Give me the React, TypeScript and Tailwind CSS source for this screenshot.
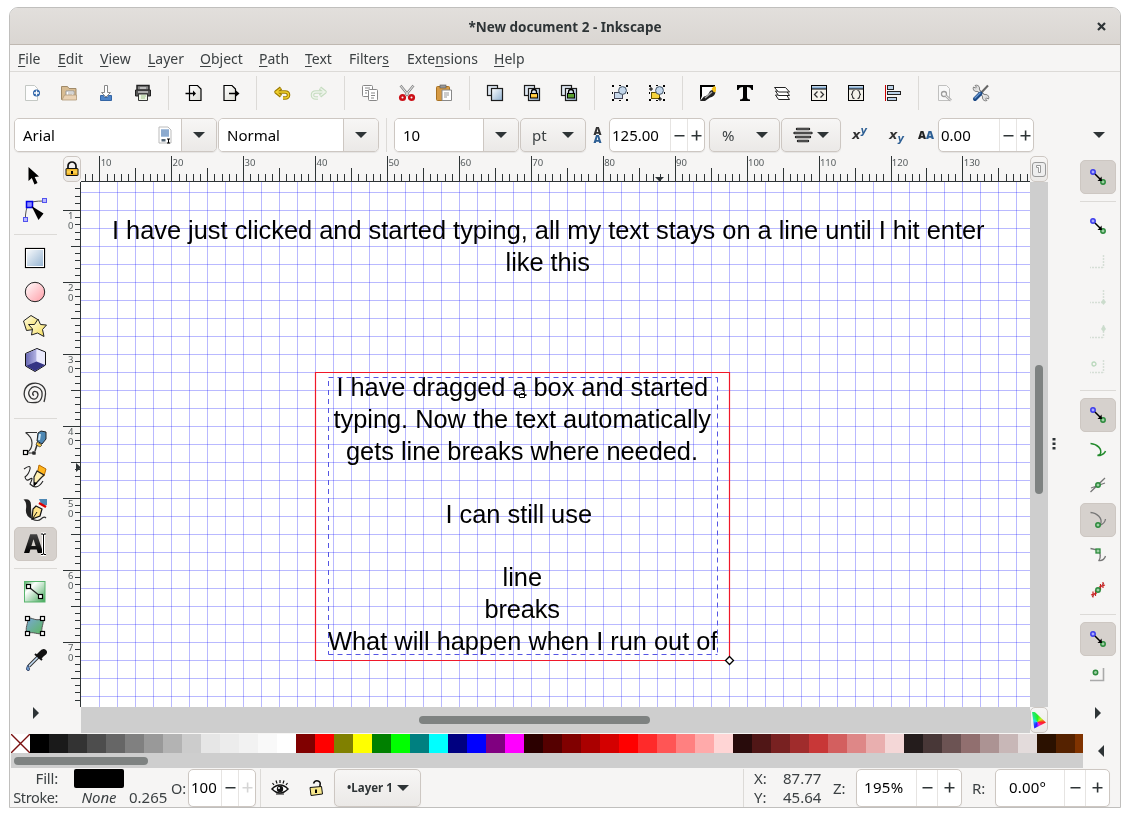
import type { ReactNode } from "react";

const DARK = "#2e3436";

function Ico({ children, s = 24 }: { children?: ReactNode; s?: number }) {
  return (
    <svg width={s} height={s} viewBox={`${-s / 2} ${-s / 2} ${s} ${s}`} fill="none" className="shrink-0 overflow-visible">
      {children}
    </svg>
  );
}

function Defs() {
  return (
    <svg width="0" height="0" className="absolute">
      <defs>
        <linearGradient id="blue" x1="0" y1="0" x2="1" y2="1"><stop stopColor="#fff" /><stop offset="1" stopColor="#8fb0d0" /></linearGradient>
        <linearGradient id="pink" x1="0" y1="0" x2="1" y2="1"><stop stopColor="#fff" /><stop offset="1" stopColor="#ff9ca6" /></linearGradient>
        <linearGradient id="yel" x1="0" y1="0" x2="1" y2="1"><stop stopColor="#fffef0" /><stop offset="1" stopColor="#f5dc50" /></linearGradient>
        <linearGradient id="grn" x1="0" y1="0" x2="1" y2="1"><stop stopColor="#4fae63" /><stop offset=".3" stopColor="#fff" /><stop offset="1" stopColor="#3fa556" /></linearGradient>
        <linearGradient id="grn2" x1="0" y1="0" x2="1" y2="1"><stop stopColor="#7aa6d8" /><stop offset="1" stopColor="#5cb85c" /></linearGradient>
        <linearGradient id="gold" x1="0" y1="0" x2="0" y2="1"><stop stopColor="#e8a812" /><stop offset=".5" stopColor="#ffd75a" /><stop offset="1" stopColor="#e39a00" /></linearGradient>
        <linearGradient id="page" x1="0" y1="0" x2="1" y2="1"><stop stopColor="#fff" /><stop offset="1" stopColor="#dcdcd4" /></linearGradient>
        <linearGradient id="ink" x1="0" y1="0" x2="0" y2="1"><stop stopColor="#444" /><stop offset="1" stopColor="#000" /></linearGradient>
        <linearGradient id="cube" x1="0" y1="0" x2="1" y2="0"><stop stopColor="#6a6ab4" /><stop offset="1" stopColor="#b4b4e4" /></linearGradient>
      </defs>
    </svg>
  );
}

const Tri = () => (
  <svg width="12" height="6" viewBox="0 0 12 6" className="shrink-0"><path d="M0 0h12L6 6z" fill={DARK} /></svg>
);

const bigBtn = "bg-linear-to-b from-[#f7f6f5] to-[#ebe9e7]";
const frame = "box-border flex shrink-0 overflow-hidden rounded-[5px] border border-[#cdc7c2] shadow-[0_1px_1px_rgba(0,0,0,0.07)]";

function Combo({ text, entry, w, icon }: { text: string; entry: string; w: string; icon?: ReactNode }) {
  return (
    <div className={`${frame} h-[34px] ${w}`}>
      <div className={`flex items-center bg-white pl-2 text-black ${entry}`}>
        <span className="pb-px">{text}</span>
        {icon && <span className="mr-2 ml-auto flex">{icon}</span>}
      </div>
      <div className={`flex flex-1 items-center justify-center border-l border-[#cdc7c2] ${bigBtn}`}><Tri /></div>
    </div>
  );
}

function Spin({ value, cls, cell, last, text, dim }: { value: string; cls: string; cell: string; last: string; text: string; dim?: boolean }) {
  return (
    <div className={`${frame} bg-white ${cls}`}>
      <div className={`flex min-w-0 flex-1 items-center pb-px text-black ${text}`}>{value}</div>
      <div className={`flex shrink-0 items-center justify-center border-l border-[#e6e4e2] ${cell}`}>
        <svg width="11" height="11"><path d="M0.500 5h10v1.600H.5z" fill={DARK} /></svg>
      </div>
      <div className={`flex shrink-0 items-center justify-center border-l border-[#e6e4e2] ${last}`}>
        <svg width="11" height="11"><path d="M0.500 5h10v1.600H.5zM4.800 .5h1.600v10H4.800z" fill={dim ? "#d5d5d5" : DARK} /></svg>
      </div>
    </div>
  );
}

const menus: [string, string, string, string][] = [
  ["", "F", "ile", "w-[40px]"], ["", "E", "dit", "w-[42px]"], ["", "V", "iew", "w-[48px]"], ["", "L", "ayer", "w-[52px]"],
  ["", "O", "bject", "w-[59px]"], ["", "P", "ath", "w-[46px]"], ["", "T", "ext", "w-[44px]"], ["Filter", "s", "", "w-[58px]"],
  ["Exte", "n", "sions", "w-[87px]"], ["", "H", "elp", "w-[60px]"],
];

const Padlock = ({ body = "url(#gold)" }: { body?: string }) => (
  <g><path d="M-2.500 1v-2a2 2 0 0 1 5 0v2" stroke="#000" strokeWidth="1.3" /><rect x="-3.500" y=".5" width="7" height="4.500" fill={body} stroke="#000" /></g>
);
const pageShape = <path d="M-6.500-7.500h8l3.500 3.500v11.500h-11.500z" fill="url(#page)" stroke="#000" strokeWidth="1.2" />;
const Dots = () => (
  <path d="M-8-8h2v2h-2zM-1-8h2v1h-2zM6-8h2v2h-2zM-8 6h2v2h-2zM-1 7h2v1h-2zM6 6h2v2h-2zM-8-1h1v2h-1zM7-1h1v2h-1z" fill="#000" />
);
const Dup = () => (
  <g stroke="#1c1c1c" strokeWidth="1.2"><rect x="-7.500" y="-7.500" width="10" height="10" fill="#dfe8f2" /><rect x="-3.500" y="-4.500" width="11" height="12" fill="url(#blue)" /></g>
);

const commands: (ReactNode | null)[] = [
  <g transform="translate(.5 0)"><path d="M-7-7.500h9l3 3v12h-12z" fill="#fdfdfd" stroke="#c4c8c4" /><circle cx="4" r="3.500" fill="#2e64a8" /><path d="M1.500 0h5M4-2.500v5" stroke="#fff" strokeWidth="1.300" /></g>,
  <><path d="M-7.500 6.500v-13h6l1.500 2h7v9z" fill="#d8bc92" stroke="#a08a68" /><path d="M-3 4v-6h8v6z" fill="#fff" stroke="#999" /><path d="M-1 0h5M-1 2h4" stroke="#aaa" /><path d="M-7 7l2.500-5h12v5z" fill="#ead2b4" stroke="#b39a78" strokeWidth=".8" /></>,
  <><path d="M-1.500-7.500h3v7h3L0 4-4.500-.5h3z" fill="#fff" stroke="#888" /><path d="M-5.500 2.500h3l1 2h3l1-2h3v5h-11z" fill="#4c83c8" stroke="#3465a4" /></>,
  <><path d="M-6-7.500h12v5h-12z" fill="#888" stroke="#222" strokeWidth="1.500" /><path d="M-3-5h6" stroke="#eee" /><path d="M-7.500-3h15v6h-15z" fill="#555" stroke="#222" /><path d="M-5-1h10" stroke="#fff" /><path d="M-4.500 1h9v6.500h-9z" fill="#eef6e6" stroke="#333" /><path d="M-2 3h5M-2 5h4" stroke="#a2c48a" /></>,
  null,
  <><g transform="translate(2 0)">{pageShape}</g><path d="M-8.500.5h8" stroke="#000" strokeWidth="1.500" /><path d="M-1-2.500L2 .5l-3 3z" fill="#000" /></>,
  <><g transform="translate(-.5 0)">{pageShape}</g><path d="M-2 .5h8" stroke="#000" strokeWidth="1.500" /><path d="M5-2.500L8.500.5 5 3.500z" fill="#000" /></>,
  null,
  <><path d="M-1-5l-5 4 5 4M-5-1H3q3.500 0 3.500 3T3 5H1" stroke="#9b7a00" strokeWidth="3.600" strokeLinejoin="round" /><path d="M-1.500-4.500l-4.500 3.500 4.500 3.500M-5-1H3q3.500 0 3.500 3T3 5H1" stroke="#f0cf2c" strokeWidth="1.500" /></>,
  <><path d="M1-5l5 4-5 4M5-1H-3q-3.500 0-3.500 3T-3 5h2" stroke="#c6dcc0" strokeWidth="3.600" strokeLinejoin="round" /><path d="M1.500-4.500L6-1 1.500 2.500M5-1H-3q-3.500 0-3.500 3T-3 5h2" stroke="#edf4ea" strokeWidth="1.500" /></>,
  null,
  <><g stroke="#888" fill="#fff"><rect x="-7.500" y="-7.500" width="10" height="11" rx="1" /><rect x="-1.500" y="-3.500" width="9" height="11" rx="1" /></g><path d="M-5-5h5M-5-2.500h3M-5 0h2M1 0h4M1 2.500h4M1 5h3" stroke="#888" /></>,
  <><path d="M-6.500-7.500L2 3M6.500-7.500L-2 3" stroke="#888" strokeWidth="2.600" /><path d="M-6.500-7.500L2 3M6.500-7.500L-2 3" stroke="#eee" strokeWidth="1" /><g stroke="#cc1018" strokeWidth="2.600"><circle cx="-4.500" cy="4.500" r="2.300" /><circle cx="4.500" cy="4.500" r="2.300" /></g></>,
  <><rect x="-7.500" y="-6.500" width="13" height="14" rx="1" fill="#d69a44" stroke="#a87122" /><rect x="-4" y="-8" width="6" height="3" fill="#999" stroke="#555" strokeWidth=".6" /><path d="M-2-3h9.500v10.500h-9.500z" fill="#fff" stroke="#888" /><path d="M0 0h5M0 2h5M0 4h3" stroke="#999" /></>,
  null,
  <Dup />,
  <><Dup /><g transform="translate(2 0)"><Padlock /></g></>,
  <><Dup /><g transform="translate(2 0)"><Padlock body="#58a030" /></g></>,
  null,
  <><Dots /><rect x="-5.500" y="-.5" width="8" height="6" fill="#c8d8ea" stroke="#445" /><circle cx="2.500" cy="-2.500" r="3.900" fill="#c3d6ea" stroke="#456" /></>,
  <><Dots /><rect x="-5.500" y="-.5" width="8" height="6" fill="#f6d43c" stroke="#665500" /><circle cx="2.500" cy="-2.500" r="3.900" fill="#c3d6ea" stroke="#456" /><path d="M-8-4h4M-6-6v4M1 6h4M3 4v4" stroke="#000" /></>,
  null,
  <><rect x="-7.500" y="-7.500" width="13" height="14.500" fill="#fff" /><path d="M-8-8h15v2h-13v9l-2 5z" fill="#000" /><path d="M-8 8L-4 3.500Q0 3 2-2l3-1.500 2.500 3Q6 4 2 4.500L-3 8z" fill="#222" /><path d="M4-1l-7 6" stroke="#aaa" strokeWidth="1.500" /><path d="M3.500-4l2.500-3 2 1v4.500L6-.5z" fill="#f5c21c" /></>,
  <path d="M-8-8H8v5H6.500Q6-6 2-6V4q0 2.500 3 2.500V8H-5V6.500q3 0 3-2.500V-6q-4 0-4.500 3H-8z" fill="#000" />,
  <g stroke="#222" fill="#fff" strokeLinejoin="round"><path d="M-6.500 2L-3.500 6.500H7.500L4.500 2z" /><path d="M-6.500-2L-3.500 2.500H7.500L4.500-2z" /><path d="M-7.500-5.500H3.500L7.500-1H-3.500z" /></g>,
  <><rect x="-7.500" y="-7.500" width="15" height="15" fill="#f4f2ea" stroke="#000" /><path d="M-7-6.500H7v2.500H-7z" fill="#8db4da" /><path d="M-7-4H7" stroke="#000" /><path d="M-1.500-1.500L-4.500 1.500l3 3M1.500-1.500l3 3-3 3" stroke="#333" strokeWidth="1.300" /></>,
  <><rect x="-7.500" y="-7.500" width="15" height="15" fill="#f4f2ea" stroke="#000" /><path d="M-7-6.500H7v2.500H-7z" fill="#8db4da" /><path d="M-7-4H7" stroke="#000" /><path d="M-1.500-2.500q-2 0-2 2t-1.500 2q1.500 0 1.500 2t2 2M1.500-2.500q2 0 2 2T5 1.500q-1.500 0-1.500 2t-2 2" stroke="#333" strokeWidth="1.100" /></>,
  <><path d="M-7.500-8V8" stroke="#c00" /><g fill="#bcd2e8" stroke="#222"><rect x="-5.500" y="-7.500" width="6" height="4" /><rect x="-5.500" y="-1.500" width="13" height="3" /><rect x="-5.500" y="4.500" width="9" height="3" /></g></>,
  null,
  <g opacity=".7"><path d="M-5.500-7.500h8l3 3v12h-11z" fill="#fafafa" stroke="#aaa" /><circle cx="0" cy="1" r="2.500" stroke="#777" strokeWidth="1.300" /><path d="M1.500 2.500L7 7.500" stroke="#888" strokeWidth="2.500" /><path d="M1.500 2.500L7 7.500" stroke="#eee" /></g>,
  <><path d="M-4-4L5 5" stroke="#777" strokeWidth="3.200" /><path d="M-6-7.500a3.200 3.200 0 1 1-1.500 1.500l2 1 1-1z" fill="#ddd" stroke="#777" strokeWidth=".9" /><path d="M6 7.500a3.200 3.200 0 1 1 1.500-1.500l-2-1-1 1z" fill="#ddd" stroke="#777" strokeWidth=".9" /><path d="M-3.500-3.500l7 7" stroke="#eee" strokeWidth="1.500" /><path d="M7-7.500L-1 1" stroke="#666" strokeWidth="2" /><path d="M-.5.500L-6 6" stroke="#1d4a86" strokeWidth="4" strokeLinecap="round" /><path d="M-1 0l-5 5" stroke="#6c9bd2" strokeWidth="1.300" strokeLinecap="round" /></>,
];

const sq = (x: number, y: number, k: string, f = "#fff", s = 4) => <rect key={k} x={x} y={y} width={s} height={s} fill={f} stroke="#000" strokeWidth="1.200" />;

const tools: (ReactNode | null)[] = [
  <path d="M-6.500-9V5L-3.200 2-.5 8.500 2.500 7-.3 1 4 .5z" fill="#000" />,
  <><path d="M-9.500 8V5Q-8.500-4-6-6.500T9-9" stroke="#555" /><rect x="-11.500" y="7.500" width="4" height="4" fill="#b8b8ff" stroke="#5353ee" /><rect x="7.500" y="-11.500" width="4" height="4" fill="#b8b8ff" stroke="#5353ee" /><rect x="-8.500" y="-8.500" width="6" height="6" fill="#8c8cff" stroke="#0000e8" strokeWidth="1.500" /><path d="M-3.500-4L8.500 3.500 3.500 10z" fill="#000" /></>,
  null,
  <><rect x="-9.500" y="-9.500" width="19" height="19" fill="url(#blue)" stroke="#000" strokeWidth="1.200" /><rect x="-8.500" y="-8.500" width="17" height="17" stroke="#fff" /></>,
  <circle cx="0" cy="0" r="9.700" fill="url(#pink)" stroke="#222" />,
  <g stroke="#222" fill="url(#yel)" strokeLinejoin="round"><path d="M-11.500-5L-4-10.500 3.500-6 2 3-8.500 4.500z" /><path d="M3-7L5.500-1.500 11.500-1 7.500 3.500 9 10.500 2.500 7-3.500 9-2.500 3-6.500-1.500-.5-1.500z" /></g>,
  <><path d="M-9.500-6.500L2-11.500 10.500-8V5L0 11.500-9.500 6z" fill="#c9c9f5" stroke="#111" strokeLinejoin="round" /><path d="M-9-6L1.500-10.800V1.500L-9 5.700z" fill="url(#cube)" /><path d="M1.500-10.800L10-7.500V5L1.500 1.500z" fill="#eaeafc" /><path d="M-9 5.700L1.500 1.500 10 5 0 11z" fill="#353584" /></>,
  <path d="M-1 1.500Q-3 .5-2-1.500T2-2Q4 .5 2 3.500T-4 4Q-8 0-5-4.500T3-6.500Q8-4 7 2T1 8.500T-7 8Q-12 3-10.500-3T-3-10.500T7-8.500T10.500 0T9 8" stroke="#333" strokeWidth="1.300" />,
  null,
  <><path d="M-9.500-9.500H2M-9.500-9.500Q-3-5-3 1T-7.500 10M-7.500 11H-1.500" stroke="#333" strokeWidth="1.200" />{sq(-11.500, 8.500, "a")}{sq(-2, 10, "b", "#fff", 2)}<path d="M3-9L6-11 11-10V-3L7 2 2-1z" fill="#4e88b4" stroke="#222" /><path d="M5-8L4-2" stroke="#cfe6f5" strokeWidth="2" /><path d="M2 0l5 3-2 2-4-2z" fill="#f5c640" stroke="#333" strokeWidth=".7" /><path d="M2 3L0 9" stroke="#333" strokeWidth="1.500" /></>,
  <><path d="M-11-7Q-4-12-5-7T-10 1Q-9 6-5 3T-5 8Q2 15 8 5" stroke="#222" strokeWidth="1.100" /><path d="M4-11L11-7 9 0 2-1z" fill="#ffb51c" stroke="#b86a00" /><path d="M2-5L9-1 5 3-1 9.500-1 1z" fill="#fff0b4" stroke="#222" strokeWidth="1.200" /><path d="M-1 10v-4L2.500 7z" fill="#000" /></>,
  <><path d="M-11.500-10.500Q-4-12-4-5T-3 9Q-10 6-9-1T-11.500-10.500z" fill="#222" /><path d="M-3 9Q3 12 6 9T11 8" stroke="#333" strokeWidth="1.200" /><path d="M4-11h8V-5L7-4z" fill="#4e88b4" /><path d="M4-7l7 4" stroke="#d00" strokeWidth="2.500" /><path d="M1-4L7-1 5 6-3 9-2-1z" fill="#ffe38a" stroke="#111" strokeWidth="1.200" /><path d="M-2 8L2 2" stroke="#111" /></>,
  <><path d="M-11 9L-4.800-9.700H2L8.300 9H2.800L1.700 5.500H-4.600L-5.700 9zM-3.600 2H.7L-1.500-4.800z" fill="url(#ink)" /><path d="M6-10h2l.5 1 .5-1h2M8.500-9V9M6 10.500h2l.5-1.500.5 1.500h2" stroke="#fff" strokeWidth="3" /><path d="M6-10h2l.5 1 .5-1h2M8.500-9V9M6 10.500h2l.5-1.500.5 1.500h2" stroke="#000" strokeWidth="1" /></>,
  null,
  <><rect x="-10.500" y="-10.500" width="20.500" height="20.500" fill="url(#grn)" stroke="#58b46c" /><path d="M-5-4L5 4" stroke="#222" strokeWidth="1.200" />{sq(-8.500, -7.500, "a")}{sq(3.500, 2.500, "b")}</>,
  <><path d="M-7.500-8C-3-9 1-4 7.500-7.500 10-3 5 2 7.500 7.500 3 9-2 5-7.500 7.500-11 2-6-3-7.500-8z" fill="url(#grn2)" stroke="#555" />{sq(-9.500, -9.500, "a")}{sq(5.500, -9.500, "b")}{sq(-9.500, 5.500, "c")}{sq(5.500, 5.500, "d")}</>,
  <><path d="M4-4L-6 6" stroke="#333" strokeWidth="3.600" /><path d="M4-4L-6 6" stroke="#c8e0f8" strokeWidth="1.600" /><path d="M1-5L4-8Q8-13 11-10T9-4L6-1z" fill="#111" /><path d="M0-6l7 6" stroke="#111" strokeWidth="2" /><path d="M-7 5Q-10 10-7 10.500T-7 5z" fill="#76a5dc" stroke="#346" /></>,
];

const Node = ({ x, y, c = "#2c8a3c", f = "#9fd0a5" }: { x: number; y: number; c?: string; f?: string }) => (
  <circle cx={x} cy={y} r="2.200" fill={f} stroke={c} strokeWidth="1.500" />
);
const SnapMain = () => (
  <><Node x={-5} y={-5} c="#3c3cec" f="#a9a9ff" /><Node x={5} y={5} /><path d="M-3-3L2 2" stroke="#000" strokeWidth="1.500" /><path d="M4 4H-.5L1.500 2 3.500-.5z" fill="#000" /></>
);
const Faded = ({ children }: { children?: ReactNode }) => (
  <><path d="M5.500-6V6.500M5 6.500H-8" stroke="#d6dfd6" strokeWidth="1.500" strokeDasharray="2 1" />{children}</>
);
const snaps: ({ i: ReactNode; on?: boolean } | null)[] = [
  { i: <SnapMain />, on: true }, null, { i: <SnapMain /> },
  { i: <Faded /> },
  { i: <Faded><path d="M5.500 3L8 6 5.500 9 3 6z" fill="#cbdccc" /></Faded> },
  { i: <Faded><path d="M5.500-6L8-2 5.500 1 3-2z" fill="#cbdccc" /></Faded> },
  { i: <Faded><circle cx="-4" cy="-2" r="2" stroke="#b9d8bc" strokeWidth="1.300" /></Faded> },
  null, { i: <SnapMain />, on: true },
  { i: <path d="M-7.500-6.500C-1-6 5-1 2 4.500L-.5 5.500H2Q6.500 4 7.500 1" stroke="#228a2c" strokeWidth="1.500" /> },
  { i: <><path d="M-7.500 7L7-7M-7 3L7-2" stroke="#777" strokeWidth="1.300" /><Node x={0} y={0} /></> },
  { i: <><path d="M-7.500-7.500C-1-7 5-2 2.500 4.500M1 5.500Q7 4 7.500-1" stroke="#777" strokeWidth="1.300" /><Node x={0} y={5} /></>, on: true },
  { i: <><path d="M-7.500-6.500L0-5Q4 0 1 5.500 6 6 7.500 1" stroke="#777" strokeWidth="1.300" /><rect x="-2" y="-6" width="4" height="4" fill="#9fd0a5" stroke="#2c8a3c" strokeWidth="1.300" /></> },
  { i: <><path d="M-6 7L6-7" stroke="#666" /><path d="M-5 1.500v6M-2.500 0v6M2.500-6v6M5-8v6M-7 5l6-2M1-3l6-2" stroke="#d02020" strokeWidth="1.200" /><Node x={0} y={0} /></> },
  null, { i: <SnapMain />, on: true },
  { i: <><path d="M5.500-6V6.500H-8" stroke="#aaa" strokeWidth="1.600" /><Node x={-2.500} y={-1.500} /></> },
];

const palette = (
  "000000 1a1a1a 333333 4d4d4d 666666 808080 999999 b3b3b3 cccccc e6e6e6 ececec f2f2f2 f9f9f9 ffffff " +
  "800000 ff0000 808000 ffff00 008000 00ff00 008080 00ffff 000080 0000ff 800080 ff00ff " +
  "2b0000 550000 800000 aa0000 d40000 ff0000 ff2a2a ff5555 ff8080 ffaaaa ffd5d5 " +
  "280b0b 501616 782121 a02c2c c83737 d35f5f de8787 e9afaf f4d7d7 241c1c 483737 6c5353 916f6f ac9393 c8b7b7 e3dbdb 2b1100 552200 803300"
).split(" ");

const canvasText: [string, number, number, number][] = [
  ["I have just clicked and started typing, all my text stays on a line until I hit enter", 112, 239, 872.500],
  ["like this", 505.500, 270.700, 84.500],
  ["I have dragged a box and started", 336.500, 396, 371.500],
  ["typing. Now the text automatically", 333.500, 427.700, 377.500],
  ["gets line breaks where needed.", 346, 459.500, 352],
  ["I can still use", 445.500, 522.800, 146.500],
  ["line", 502.500, 586, 39.500],
  ["breaks", 484.500, 617.900, 75.500],
  ["What will happen when I run out of", 328, 649.600, 389.500],
];

function HRuler() {
  const ticks = [];
  for (let i = -2; i <= 129; i++) {
    const x = Math.floor(99.9 + i * 7.192) + 0.5;
    const y = i % 10 === 0 ? 156 : i % 5 === 0 ? 168 : 174;
    if (x > 81 && x < 1030) ticks.push(<path key={i} d={`M${x} ${y}V182`} stroke={DARK} />);
  }
  return (
    <svg width="949" height="26" viewBox="81 156 949 26">
      {ticks}
      <path d="M81 181.500H1030" stroke={DARK} />
      {Array.from({ length: 13 }, (_, k) => (
        <text key={k} x={100.700 + k * 71.920} y="166" fontSize="9.500" fill="#555b5d">{(k + 1) * 10}</text>
      ))}
      <path d="M655 177h9l-4.500 4.500z" fill={DARK} />
    </svg>
  );
}

function VRuler() {
  const ticks = [];
  for (let i = -3; i <= 68; i++) {
    const y = Math.floor(210.400 + i * 7.200) + 0.5;
    const x = i % 10 === 0 ? 63 : i % 5 === 0 ? 71 : 75;
    ticks.push(<path key={i} d={`M${x} ${y}H81`} stroke={DARK} />);
  }
  return (
    <svg width="18" height="525" viewBox="63 182 18 525">
      {ticks}
      <path d="M80.500 182V707" stroke={DARK} />
      {[1, 2, 3, 4, 5, 6, 7].map((d, k) => (
        <g key={d} fontSize="9.500" fill="#555b5d">
          <text x="68" y={219 + k * 72}>{d}</text>
          <text x="68" y={228.500 + k * 72}>0</text>
        </g>
      ))}
      <path d="M76 463v9l5-4.500z" fill={DARK} />
    </svg>
  );
}

function Canvas() {
  return (
    <svg width="949" height="525" viewBox="81 182 949 525" className="bg-white">
      {Array.from({ length: 52 }, (_, k) => {
        const x = Math.floor(99.900 + k * 17.980) + 0.5;
        return <path key={`v${k}`} d={`M${x} 182V707`} stroke="#b9b9ff" />;
      })}
      {Array.from({ length: 29 }, (_, k) => (
        <path key={`h${k}`} d={`M81 ${192.5 + k * 18}H1030`} stroke="#b9b9ff" style={{ mixBlendMode: "multiply" }} />
      ))}
      <g fontFamily="Liberation Sans, Arial, sans-serif" fontSize="25.400" fill="#000">
        {canvasText.map(([t, x, y, w]) => (
          <text key={t} x={x} y={y} textLength={w}>{t}</text>
        ))}
      </g>
      <path d="M328.500 377.500H717.500M717.500 377.500V654.500M328.500 654.500H717.500M328.500 381V654.500" stroke="#5555e2" strokeDasharray="5 4" fill="none" />
      <path d="M315.500 372.500H729.500V660.500H315.500z" stroke="#f0182a" strokeWidth="1.200" fill="none" />
      <path d="M729.500 656.500l4 4-4 4-4-4z" fill="#fff" stroke="#000" strokeWidth="1.300" />
      <path d="M519.500 394.500h5v3h-5z" fill="#fff" stroke="#000" /><path d="M519 393l3-3 3 3" fill="#fff" stroke="#000" strokeDasharray="1 1.500" />
    </svg>
  );
}

export default function App() {
  return (
    <div className="h-[817px] w-[1130px] overflow-hidden bg-white pt-[7px] pl-[9px] font-['Noto_Sans',sans-serif] text-[15px] leading-5 text-[#3c4143]">
      <Defs />
      <div className="flex h-[801px] w-[1112px] flex-col overflow-hidden rounded-t-[9px] border border-[#c0bfbd] bg-[#f6f5f4]">
        <header className="flex h-[37px] shrink-0 items-center border-b border-[#bfb8b1] bg-linear-to-b from-[#e2dfdc] to-[#dad6d2]">
          <div className="flex-1 pt-px text-center text-[13.500px] font-bold text-[#2e3436]">
            <span>*New document 2 - Inkscape</span>
          </div>
          <svg width="9" height="9" viewBox="0 0 9 9" className="-ml-[23px] mr-[14px]"><path d="M1 1l7 7M8 1L1 8" stroke={DARK} strokeWidth="2.200" /></svg>
        </header>
        <nav className="flex h-[27px] shrink-0 items-center border-b border-[#dcdad7] pt-[2px] pl-2 text-[14px]">
          {menus.map(([a, u, b, w]) => (
            <span key={a + u + b} className={`shrink-0 whitespace-nowrap ${w}`}>{a}<span className="underline decoration-1 underline-offset-2">{u}</span>{b}</span>
          ))}
        </nav>
        <div className="flex h-[42px] shrink-0 items-center pl-[3.500px]">
          {commands.map((c, i) =>
            c === null ? (
              <div key={i} className="h-[34px] w-[14px] shrink-0 pl-[6.500px]"><div className="h-full w-px bg-[#dcdad7]" /></div>
            ) : (
              <div key={i} className="flex w-[37px] shrink-0 justify-center"><Ico>{c}</Ico></div>
            )
          )}
        </div>
        <div className="flex h-[40px] shrink-0 items-center pt-[2px] pl-1">
          <Combo text="Arial" entry="w-[166px]" w="mr-px w-[203px]" icon={
            <Ico s={16}><path d="M-6-8h9l3 3V8H-6z" fill="#fff" stroke="#bbb" /><rect x="-4" y="-6" width="8" height="8" fill="#a9c1de" /><path d="M-4-4h8M-4-2h8M-4 0h8" stroke="#6f93c0" /><rect x="-3.500" y="4" width="4" height="2.500" fill="#567" /><path d="M2 4h3M3.500 4v4M2 8h3" stroke="#000" /></Ico>
          } />
          <Combo text="Normal" entry="w-[124px]" w="mr-[7px] w-[161px]" />
          <div className="mr-[7px] h-[34px] w-px bg-[#dcdad7]" />
          <Combo text="10" entry="w-[88px]" w="mr-px w-[125px]" />
          <div className={`${frame} h-[34px] w-[66px] items-center justify-between pr-[11px] pl-[11px] ${bigBtn}`}><span className="pb-px">pt</span><Tri /></div>
          <div className="flex w-[23px] shrink-0 flex-col items-center text-[11px] leading-[8px] font-black"><span className="text-[#333]">A</span><span className="text-[#2d5f94]">A</span></div>
          <Spin value="125.00" cls="h-[34px] w-[96px] mr-[4px]" cell="w-[17px]" last="w-[17px]" text="pl-[2px]" />
          <div className={`${frame} mr-px h-[34px] w-[71px] items-center justify-between pr-[11px] pl-[12px] ${bigBtn}`}><span className="pb-px">%</span><Tri /></div>
          <div className={`${frame} h-[34px] w-[60px] items-center justify-between pr-[11px] pl-[11px] ${bigBtn}`}>
            <svg width="20" height="16" viewBox="0 0 20 16"><g stroke="#222" strokeWidth="2.400" strokeLinecap="round"><path d="M4 2h12M1.500 6h17M3 10h14M5 14h10" /></g><g stroke="#8a8a8a" strokeWidth=".8"><path d="M4 2h12M1.500 6h17M3 10h14M5 14h10" /></g></svg>
            <Tri />
          </div>
          <div className="flex w-[37px] shrink-0 justify-center font-['DejaVu_Sans',sans-serif] text-[13px] font-bold text-[#333] italic"><span>x<sup className="text-[10px] text-[#2d5f94]">y</sup></span></div>
          <div className="flex w-[37px] shrink-0 justify-center font-['DejaVu_Sans',sans-serif] text-[13px] font-bold text-[#333] italic"><span>x<sub className="text-[10px] text-[#2d5f94]">y</sub></span></div>
          <div className="w-[23px] shrink-0 pl-[3px] text-[11px] font-black text-[#222]">A<span className="text-[#2d5f94]">A</span></div>
          <Spin value="0.00" cls="h-[34px] w-[96px]" cell="w-[17px]" last="w-[17px]" text="pl-[2px]" />
          <div className="ml-auto pr-[15px]"><Tri /></div>
        </div>

        <main className="flex h-[579px] shrink-0">
          <aside className="flex w-[53px] shrink-0 flex-col pt-[5px] pl-1">
            {tools.map((t, i) =>
              t === null ? (
                <div key={i} className="flex h-[14px] w-[43px] items-center"><div className="h-px w-full bg-[#dcdad7]" /></div>
              ) : (
                <div key={i} className={`flex h-[34px] w-[43px] items-center justify-center pr-px ${i === 12 ? "rounded-[5px] border border-[#cdc7c2] bg-[#d6d1cd]" : ""}`}><Ico>{t}</Ico></div>
              )
            )}
            <svg width="6" height="12" className="mt-[30px] ml-[19px]"><path d="M0 0v12l6-6z" fill={DARK} /></svg>
          </aside>
          <section className="grid w-[985px] shrink-0 grid-cols-[18px_949px_18px] grid-rows-[26px_525px_26px] pt-[2px]">
            <div className={`flex items-center justify-center rounded-[5px] border border-[#cdc7c2] ${bigBtn}`}>
              <Ico s={16}><path d="M-4 0v-3a4 4 0 0 1 8 0v3" stroke="#111" strokeWidth="1.700" /><rect x="-6" y="-.5" width="12" height="7" rx=".5" fill="url(#gold)" stroke="#111" /><path d="M-1 2h2v3h-2z" fill="#000" /></Ico>
            </div>
            <HRuler />
            <div className={`flex items-center justify-center rounded-[5px] border border-[#cdc7c2] ${bigBtn}`}>
              <Ico s={16}><rect x="-6.500" y="-6.500" width="13" height="14" rx="2.500" fill="#eee" stroke="#999" /><path d="M-2.500-3.500h4v7h-2v-5h-2z" fill="#fff" stroke="#999" /></Ico>
            </div>
            <VRuler />
            <Canvas />
            <div className="bg-[#cecece] pt-[183px] pl-[5px]"><div className="h-[129px] w-2 rounded-full bg-[#7e8281]" /></div>
            <div />
            <div className="bg-[#cecece] pt-[9px] pl-[338px]"><div className="h-2 w-[231px] rounded-full bg-[#7e8281]" /></div>
            <div className={`flex items-center justify-center rounded-[5px] border border-[#cdc7c2] ${bigBtn}`}>
              <div className="h-[17px] w-[14px] bg-[conic-gradient(from_0deg_at_38%_58%,#20f020,#c8f020_16%,#ff2020_26%,#ff2060_34%,#f020f0_42%,#2020ff_55%,#2060ff_66%,#20e0f0_80%,#20f020)] [clip-path:polygon(0_0,22%_4%,100%_64%,16%_100%)]" />
            </div>
          </section>
          <div className="flex w-8 shrink-0 flex-col items-start pt-[284px] pl-[4px]">
            <svg width="4" height="14"><path d="M.5 0h3v2.500h-3zM.5 4.500h3V7h-3zM.5 9h3v2.500h-3z" fill={DARK} /></svg>
          </div>
          <aside className="flex w-9 shrink-0 flex-col pt-[5.500px]">
            {snaps.map((s, i) =>
              s === null ? (
                <div key={i} className="flex h-[14px] items-center"><div className="h-px w-full bg-[#dcdad7]" /></div>
              ) : (
                <div key={i} className="flex h-[35px] items-center">
                  <div className={`flex h-[34px] w-9 items-center justify-center rounded-[5px] ${s.on ? "border border-[#cdc7c2] bg-[#d6d1cd]" : ""}`}><Ico s={20}>{s.i}</Ico></div>
                </div>
              )
            )}
            <svg width="6" height="12" className="mt-[15.500px] ml-[15px]"><path d="M0 0v12l6-6z" fill={DARK} /></svg>
          </aside>
        </main>

        <div className="flex h-[35px] shrink-0 pt-px pl-px">
          <div className="w-[1072px] shrink-0 overflow-hidden">
            <div className="flex h-[19px]">
              <svg width="19" height="19" className="shrink-0 bg-white"><path d="M0 0l19 19M19 0L0 19" stroke="#7a1010" strokeWidth="1.400" /></svg>
              {palette.map((c, i) => (
                <div key={i} className="h-[19px] w-[19px] shrink-0" style={{ backgroundColor: `#${c}` }} />
              ))}
            </div>
            <div className="h-[15px] bg-[#cecece] pt-1 pl-[3px]"><div className="h-2 w-[134px] rounded-full bg-[#7e8281]" /></div>
          </div>
          <svg width="6" height="12" className="mt-[11px] ml-[15px]"><path d="M6 0v12L0 6z" fill={DARK} /></svg>
        </div>

        <footer className="flex h-[39px] shrink-0 items-center">
          <div className="flex w-[48px] shrink-0 flex-col items-end leading-[19px]"><span className="tracking-[-0.200px]">Fill:</span><span className="text-[14.500px] tracking-[-0.400px]">Stroke:</span></div>
          <div className="ml-4 flex w-[50px] shrink-0 flex-col items-center"><div className="h-[19px] w-[50px] rounded-[2px] bg-black" /><span className="leading-[19px] italic">None</span></div>
          <div className="ml-[5px] w-[42px] shrink-0 pt-[19px] leading-[19px]">0.265</div>
          <div className="w-[17px] shrink-0 text-[14.500px]">O:</div>
          <Spin value="100" cls="h-[38px] w-[68px]" cell="w-[17px]" last="w-[17px]" text="pl-[2px]" dim />
          <div className="ml-1 h-[38px] w-px shrink-0 bg-[#dcdad7]" />
          <div className="ml-[7px] flex w-6 shrink-0"><Ico><path d="M-8 1Q0-7 8 1 0 9-8 1z" fill="#fff" stroke="#111" strokeWidth="1.500" /><circle cy="1" r="3.200" fill="#111" /><circle cx="-1" cy="0" r="1" fill="#fff" /><path d="M-6-3l-1.500-2M-3-4.500L-4-7.500M0-5V-8M3-4.500L4-7.500M6-3l1.500-2M-4 6H4" stroke="#111" strokeWidth="1.200" /></Ico></div>
          <div className="ml-[12px] flex w-6 shrink-0"><Ico><path d="M-2.500-4.500Q-1-8 2-7T4 -3V1" stroke="#111" strokeWidth="1.600" /><path d="M-6-.5L5.500-1.500 6.500 6-5 7.500z" fill="#f8e88c" stroke="#111" /><path d="M-1 1.500h2v3.500h-2z" fill="#000" /></Ico></div>
          <div className={`${frame} ml-[6px] h-[38px] w-[87px] items-center justify-between pr-[11px] pl-[12px] text-[11.500px] font-bold whitespace-nowrap text-[#2e3436] ${bigBtn}`}><span>•Layer 1</span><Tri /></div>
          <div className="ml-[322px] h-[38px] w-px shrink-0 bg-[#dcdad7]" />
          <div className="ml-[10px] w-[29px] shrink-0 leading-[19px]">X:<br />Y:</div>
          <div className="w-[50px] shrink-0 leading-[19px]">87.77<br />45.64</div>
          <div className="w-[23px] shrink-0">Z:</div>
          <Spin value="195%" cls="h-[38px] w-[106px]" cell="w-[21px]" last="w-[24px]" text="pl-[7px] tracking-[0.300px]" />
          <div className="ml-[10px] w-[23px] shrink-0">R:</div>
          <Spin value="0.00°" cls="h-[38px] w-[115px]" cell="w-[21px]" last="w-[24px]" text="pl-[13px] tracking-[0.200px]" />
        </footer>
      </div>
    </div>
  );
}
